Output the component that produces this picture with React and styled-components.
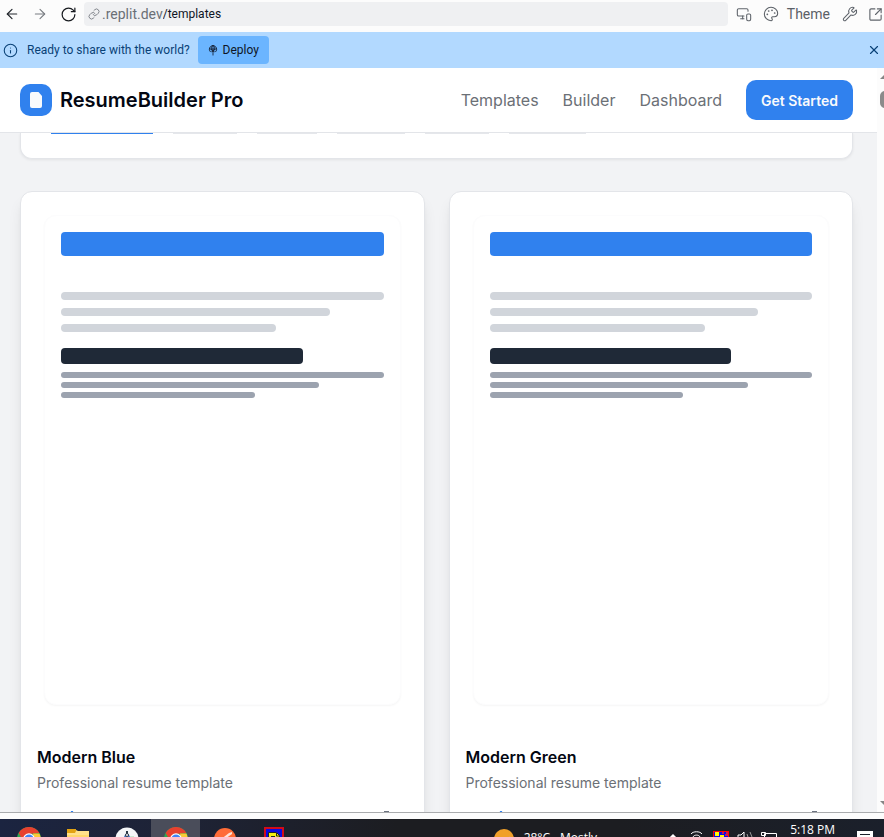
import React from "react";
import styled, { createGlobalStyle } from "styled-components";
import { ArrowLeft, ArrowRight, RotateCw, Link, MonitorSmartphone, Palette, Wrench, SquareArrowOutUpRight, Info, X } from "lucide-react";

const Global = createGlobalStyle`
  * { box-sizing: border-box; }
  html, body { margin: 0; height: 100%; }
  #root { height: 100%; }
  body { font-family: Inter, "Liberation Sans", sans-serif; overflow: hidden; background: #fcfcfc; }
  button { font: inherit; border: 0; padding: 0; background: none; color: inherit; cursor: pointer; }
  svg { display: block; flex: none; }
`;

const Window = styled.div`
  height: 100vh;
  display: flex;
  flex-direction: column;
  overflow: hidden;
`;

const Toolbar = styled.div`
  flex: none;
  height: 32px;
  display: flex;
  align-items: center;
  padding: 0 0 4px 4px;
  background: #fcfcfc;
  color: #5b6067;
`;

const IconButton = styled.button`
  flex: none;
  width: ${(p) => p.$width || 28}px;
  height: 24px;
  display: flex;
  align-items: center;
  color: ${(p) => p.$color || "#5f646b"};
`;

const Address = styled.form`
  flex: 1;
  height: 24px;
  display: flex;
  align-items: center;
  margin-right: 8px;
  padding: 0 4px;
  border-radius: 4px;
  background: #eff0f2;
  font: 14px Roboto, sans-serif;
  color: #6a6f76;
`;

const Host = styled.span`
  margin-left: 2px;
`;

const PathInput = styled.input`
  flex: 1;
  min-width: 0;
  border: 0;
  padding: 0;
  outline: 0;
  background: none;
  color: #0e1525;
  font: 12px Roboto, sans-serif;
`;

const ThemeButton = styled.button`
  display: flex;
  align-items: center;
  gap: 8px;
  margin-right: 12px;
  font: 14px Roboto, sans-serif;
  color: #5b6067;
`;

const Banner = styled.div`
  flex: none;
  height: 36px;
  display: flex;
  align-items: center;
  padding: 0 3px;
  background: #b2d9ff;
  color: #094176;
  font: 12px Roboto, sans-serif;
`;

const BannerText = styled.span`
  margin: 0 8px 0 9px;
`;

const Deploy = styled.button`
  height: 28px;
  display: flex;
  align-items: center;
  gap: 5px;
  padding: 0 10px;
  border-radius: 4px;
  background: #6bb5ff;
  color: #0e1525;
`;

const Dismiss = styled.button`
  margin-left: auto;
`;

const Viewport = styled.div`
  flex: 1;
  min-height: 0;
  display: flex;
  border-bottom: 1px solid #a9abad;
`;

const Page = styled.div`
  flex: 1;
  min-width: 0;
  display: flex;
  flex-direction: column;
  overflow: hidden;
  background: #f2f3f5;
`;

const Scrollbar = styled.div`
  flex: none;
  width: 7px;
  display: flex;
  flex-direction: column;
  justify-content: space-between;
  padding: 7px 0 7px 3px;
  overflow: hidden;
  background: #fcfcfc;
`;

const Thumb = styled.div`
  width: 12px;
  height: 17px;
  margin-top: 12px;
  border-radius: 5px;
  background: #8b8b8b;
`;

const Header = styled.header`
  flex: none;
  height: 65px;
  display: flex;
  align-items: center;
  padding: 0 24px 0 20px;
  border-bottom: 1px solid #e3e5e9;
  background: #fff;
`;

const Brand = styled.a`
  display: flex;
  align-items: center;
  gap: 8px;
  margin-right: auto;
  color: #030712;
  font-size: 20px;
  font-weight: 600;
  text-decoration: none;
  white-space: nowrap;
`;

const Nav = styled.nav`
  display: flex;
  align-items: center;
  gap: 24px;
`;

const NavLink = styled.a`
  color: #6b7076;
  font-size: 16px;
  text-decoration: none;
`;

const GetStarted = styled.button`
  height: 40px;
  padding: 0 15px;
  border-radius: 10px;
  background: #3081ee;
  color: #f8fafc;
  font-size: 14px;
  font-weight: 600;
`;

const Content = styled.main`
  flex: 1;
  min-height: 0;
  overflow: hidden;
  padding: 0 24px 0 20px;
`;

const Filters = styled.section`
  height: 26px;
  display: flex;
  align-items: flex-start;
  gap: 20px;
  padding: 0 30px;
  border: 1px solid #e3e5e9;
  border-top: 0;
  border-radius: 0 0 12px 12px;
  background: #fff;
  box-shadow: 0 1px 3px rgba(0, 0, 0, 0.07);
`;

const FilterEdge = styled.div`
  width: ${(p) => p.$width}px;
  height: 1px;
  background: ${(p) => (p.$active ? "#3081ee" : "#e5e7eb")};
`;

const Grid = styled.div`
  display: grid;
  grid-template-columns: 1fr 1fr;
  gap: 24px;
  margin-top: 32px;
`;

const Card = styled.article`
  min-width: 0;
  border: 1px solid #e3e5e9;
  border-radius: 12px;
  background: #fff;
  box-shadow: 0 10px 15px -3px rgba(0, 0, 0, 0.1), 0 4px 6px -4px rgba(0, 0, 0, 0.1);
`;

const Preview = styled.div`
  height: 490px;
  margin: 23px 23px 0;
  padding: 16px;
  border-radius: 12px;
  border: 1px solid #fcfcfd;
  box-shadow: 0 1px 2px rgba(0, 0, 0, 0.04);
  background: #fff;
`;

const Bar = styled.div`
  width: ${(p) => p.$width}%;
  height: ${(p) => p.$height}px;
  margin-bottom: ${(p) => p.$gap}px;
  border-radius: 4px;
  background: ${(p) => p.$color};
`;

const Details = styled.div`
  padding: 40px 16px 16px;
`;

const Title = styled.h3`
  margin: 0;
  color: #030712;
  font-size: 16px;
  font-weight: 600;
  line-height: 24px;
`;

const Subtitle = styled.p`
  margin: 4px 0 0;
  color: #6b7076;
  font-size: 14px;
  line-height: 20px;
`;

const Meta = styled.div`
  display: flex;
  justify-content: space-between;
  margin-top: 18px;
  padding: 0 18px 0 28px;
`;

const Taskbar = styled.footer`
  flex: none;
  height: 24px;
  display: flex;
  align-items: flex-start;
  padding-left: 4px;
  border-top: 6px solid #fcfcfc;
  background: linear-gradient(90deg, #1b2440, #1e2336 20%, #1c1d21 45%, #1c1d21 70%, #1b202b);
  color: #fff;
  font-family: "Open Sans", sans-serif;
  font-size: 12px;
  overflow: hidden;
`;

const TaskItem = styled.button`
  flex: none;
  width: 49px;
  height: 32px;
  display: flex;
  justify-content: center;
  align-items: flex-start;
  padding-top: 8px;
  background: ${(p) => (p.$active ? "#4a4d5a" : "transparent")};
`;

const Weather = styled.button`
  display: flex;
  align-items: flex-start;
  gap: 10px;
  margin-left: auto;
  padding-top: 10px;
  line-height: 18px;
  white-space: nowrap;
`;

const Tray = styled.div`
  margin-left: 68px;
`;

const Clock = styled.time`
  margin: 2px 22px 0 13px;
  line-height: 18px;
  white-space: nowrap;
`;

const Notice = styled.button`
  margin-right: 11px;
  padding-top: 12px;
`;

function LogoMark() {
  return (
    <svg width="32" height="32" viewBox="0 0 32 32">
      <rect width="32" height="32" rx="10" fill="#3081ee" />
      <path d="M12 8h6.500l3.500 4V22a2 2 0 0 1-2 2h-8a2 2 0 0 1-2-2V10a2 2 0 0 1 2-2z" fill="#f8fafc" />
    </svg>
  );
}

function DeployGlyph() {
  return (
    <svg width="10" height="12" viewBox="0 0 11 12" fill="none" stroke="#0e1525">
      <path d="M3 8.300A4 4 0 1 1 8 8.300M1.500 5h8M5.500 1v11M3.500 5c0-2 .8-3.600 2-4 1.200.4 2 2 2 4M3.500 5l2 3 2-3M3.700 8l1.800-1.500L7.300 8" strokeWidth="0.900" />
    </svg>
  );
}

function Chrome() {
  return (
    <svg width="24" height="24" viewBox="0 0 24 24">
      <circle cx="12" cy="12" r="12" fill="#2da94f" />
      <path d="M1.600 6A12 12 0 0 1 22.400 6L12 7v5L6.800 15z" fill="#e8402f" />
      <path d="M22.400 6.500A12 12 0 0 1 12 24l5.200-9L16 6.500z" fill="#fcc934" />
      <circle cx="12" cy="12" r="5.800" fill="#fff" />
      <circle cx="12" cy="12" r="4.600" fill="#3f83f8" />
    </svg>
  );
}

function Folder() {
  return (
    <svg width="22" height="21" viewBox="0 0 22 21">
      <path d="M0 3h9l2 1h11v17H0z" fill="#ffd76a" />
      <path d="M0 2h9v4H0z" fill="#e2a313" />
      <path d="M9 4h13v4H0V6h8z" fill="#ffe08a" />
    </svg>
  );
}

function Studio() {
  return (
    <svg width="24" height="24" viewBox="0 0 24 24">
      <circle cx="12" cy="12" r="11.500" fill="#f5f7f8" />
      <path d="M12 4v3" stroke="#273746" strokeWidth="2" />
      <path d="M11 8L6 19M13 8l5 11" stroke="#3e6fc4" strokeWidth="2" />
      <circle cx="12" cy="8" r="1.500" fill="#fff" stroke="#273746" />
      <path d="M15 10h4" stroke="#9bdcaf" />
    </svg>
  );
}

function Postman() {
  return (
    <svg width="22" height="24" viewBox="0 0 22 24">
      <circle cx="11" cy="12" r="11" fill="#ff6c37" />
      <path d="M6 13l9-7 3-1v2l-10 7z" fill="#ffe2d6" />
    </svg>
  );
}

function Notes() {
  return (
    <svg width="20" height="20" viewBox="0 0 20 20">
      <rect x="1" y="1" width="18" height="19" fill="#0a0ae0" stroke="#d30b1a" strokeWidth="2" />
      <path d="M4.500 5.500h8l3 3V20h-11z" fill="#f2ee10" stroke="#222" />
      <path d="M7 9.500h4M12.500 6v3h3" stroke="#222" fill="none" />
    </svg>
  );
}

function Sun() {
  return (
    <svg width="20" height="20" viewBox="0 0 20 20">
      <circle cx="10" cy="10" r="10" fill="#f0a029" />
      <path d="M12 12a4 4 0 0 1 5-4v8h-5z" fill="#a7b3ce" />
    </svg>
  );
}

function TrayIcons() {
  return (
    <svg width="112" height="18" viewBox="0 0 112 18" fill="none" stroke="#fff">
      <path d="M5 19l3-3 3 3" strokeWidth="1.500" />
      <path d="M26 15c2-3 9-3 11 0M28 18c1-2.500 6-2.500 7 0" />
      <rect x="48.500" y="12.500" width="15" height="8" fill="#0808e8" stroke="#f00" />
      <path d="M50 13h4v4h-4zM55 16h4v2h-4z" fill="#ff0" stroke="none" />
      <path d="M57 14h2M60 16h3M61 14h2" stroke="#f22" strokeWidth="1.500" />
      <path d="M73 18v-2h3l3-3v6" />
      <path d="M82 15l1 3M85 13l2 5" stroke="#999" />
      <path d="M99.500 19v-4.500h12V19M96.500 13.500h4v3h-4z" />
    </svg>
  );
}

const filters = [
  { width: 102, active: true },
  { width: 64 },
  { width: 60 },
  { width: 68 },
  { width: 64 },
  { width: 77 },
];

const bars = [
  { $width: 100, $height: 24, $gap: 36, $color: "#3081ee" },
  { $width: 100, $height: 8, $gap: 8, $color: "#d1d5db" },
  { $width: 83.333, $height: 8, $gap: 8, $color: "#d1d5db" },
  { $width: 66.667, $height: 8, $gap: 16, $color: "#d1d5db" },
  { $width: 75, $height: 16, $gap: 8, $color: "#1f2937" },
  { $width: 100, $height: 6, $gap: 4, $color: "#9ca3af" },
  { $width: 80, $height: 6, $gap: 4, $color: "#9ca3af" },
  { $width: 60, $height: 6, $gap: 0, $color: "#9ca3af" },
];

const tasks = [
  { label: "Chrome", Icon: Chrome },
  { label: "File Explorer", Icon: Folder },
  { label: "Android Studio", Icon: Studio },
  { label: "Chrome, active window", Icon: Chrome, active: true },
  { label: "Postman", Icon: Postman },
  { label: "Notes", Icon: Notes },
];

function TemplateCard({ name }) {
  return (
    <Card>
      <Preview>
        {bars.map((bar, i) => (
          <Bar key={i} {...bar} />
        ))}
      </Preview>
      <Details>
        <Title>{name}</Title>
        <Subtitle>Professional resume template</Subtitle>
        <Meta aria-hidden="true">
          <svg width="14" height="14" viewBox="0 0 14 14"><path d="M6 0h2l1 5h5l-4 3 2 6-5-4-5 4 2-6-4-3h5z" fill="#3081ee" /></svg>
          <svg width="7" height="14" viewBox="0 0 7 14"><path d="M1 1h5" stroke="#6a717f" strokeWidth="2" /></svg>
        </Meta>
      </Details>
    </Card>
  );
}

export default function App() {
  return (
    <Window>
      <Global />
      <Toolbar>
        <IconButton aria-label="Back" $color="#22262c"><ArrowLeft size={16} strokeWidth={1.8} /></IconButton>
        <IconButton aria-label="Forward" $color="#777b80"><ArrowRight size={16} strokeWidth={1.6} /></IconButton>
        <IconButton aria-label="Reload" $width={24} $color="#16191e"><RotateCw size={17} strokeWidth={1.7} /></IconButton>
        <Address>
          <Link size={12} strokeWidth={1.6} />
          <Host>.replit.dev</Host>
          <PathInput aria-label="Path" defaultValue="/templates" />
        </Address>
        <IconButton aria-label="Device preview" $width={27}><MonitorSmartphone size={16} strokeWidth={1.6} /></IconButton>
        <ThemeButton><Palette size={16} strokeWidth={1.6} />Theme</ThemeButton>
        <IconButton aria-label="Developer tools" $width={26}><Wrench size={16} strokeWidth={1.6} /></IconButton>
        <IconButton aria-label="Open in new tab" $width={16}><SquareArrowOutUpRight size={15} strokeWidth={1.8} /></IconButton>
      </Toolbar>
      <Banner>
        <Info size={15} strokeWidth={1.7} />
        <BannerText>Ready to share with the world?</BannerText>
        <Deploy><DeployGlyph />Deploy</Deploy>
        <Dismiss aria-label="Dismiss"><X size={14} strokeWidth={2} /></Dismiss>
      </Banner>
      <Viewport>
        <Page>
          <Header>
            <Brand href="#"><LogoMark />ResumeBuilder Pro</Brand>
            <Nav>
              <NavLink href="#templates">Templates</NavLink>
              <NavLink href="#builder">Builder</NavLink>
              <NavLink href="#dashboard">Dashboard</NavLink>
              <GetStarted>Get Started</GetStarted>
            </Nav>
          </Header>
          <Content>
            <Filters>
              {filters.map((f, i) => (
                <FilterEdge key={i} $width={f.width} $active={f.active} />
              ))}
            </Filters>
            <Grid>
              <TemplateCard name="Modern Blue" />
              <TemplateCard name="Modern Green" />
            </Grid>
          </Content>
        </Page>
        <Scrollbar>
          <div>
            <svg width="8" height="4" viewBox="0 0 8 4"><path d="M0 4l4-4 4 4z" fill="#858585" /></svg>
            <Thumb />
          </div>
          <svg width="8" height="4" viewBox="0 0 8 4"><path d="M0 0h8L4 4z" fill="#858585" /></svg>
        </Scrollbar>
      </Viewport>
      <Taskbar>
        {tasks.map(({ label, Icon, active }) => (
          <TaskItem key={label} aria-label={label} $active={active}><Icon /></TaskItem>
        ))}
        <Weather><Sun /><span>28°C</span><span>Mostly</span></Weather>
        <Tray><TrayIcons /></Tray>
        <Clock>5:18 PM</Clock>
        <Notice aria-label="Notifications">
          <svg width="16" height="12" viewBox="0 0 16 12"><path d="M0 0h16v12H0z" fill="#fff" /><path d="M3 3.500h10" stroke="#1b202b" /></svg>
        </Notice>
      </Taskbar>
    </Window>
  );
}
